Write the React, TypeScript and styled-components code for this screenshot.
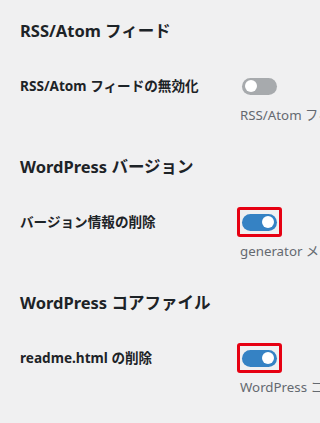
import styled, { createGlobalStyle } from "styled-components";

const GlobalStyle = createGlobalStyle`
  html, body {
    margin: 0;
    padding: 0;
    background: #f0f0f1;
    overflow: hidden;
  }
  body {
    font-family: "Noto Sans", "Noto Sans CJK JP", sans-serif;
    color: #1d2327;
  }
`;

const Page = styled.div`
  width: 320px;
  height: 423px;
  overflow: hidden;
  padding: 19px 0 0 20px;
  box-sizing: border-box;
`;

const Section = styled.section`
  margin-bottom: 30px;
`;

const Heading = styled.h2`
  margin: 0;
  font-size: 16.5px;
  line-height: 24px;
  font-weight: 700;
  white-space: nowrap;
`;

const Row = styled.div`
  display: grid;
  grid-template-columns: 220px 400px;
  margin-top: 28px;
`;

const Label = styled.div`
  font-size: 13.6px;
  font-weight: 700;
  line-height: 30px;
  white-space: nowrap;
`;

const Field = styled.div`
  display: flex;
  flex-direction: column;
  align-items: flex-start;
`;

const SwitchBox = styled.span<{ $marked: boolean }>`
  display: inline-flex;
  align-items: center;
  justify-content: center;
  width: 45px;
  height: 30px;
  box-sizing: border-box;
  margin-left: -3px;
  border: 3px solid ${(p) => (p.$marked ? "#e60012" : "transparent")};
  border-radius: 3px;
`;

const Track = styled.span<{ $on: boolean }>`
  display: flex;
  align-items: center;
  justify-content: ${(p) => (p.$on ? "flex-end" : "flex-start")};
  width: 35px;
  height: 17px;
  padding: 0 3px;
  box-sizing: border-box;
  border-radius: 9px;
  background: ${(p) => (p.$on ? "#3582c4" : "#a7aaad")};
`;

const Knob = styled.span`
  width: 12px;
  height: 12px;
  border-radius: 50%;
  background: #fff;
`;

const Description = styled.p`
  margin: 4px 0 0;
  font-size: 13.3px;
  line-height: 20px;
  color: #646970;
  white-space: nowrap;
`;

interface Setting {
  heading: string;
  label: string;
  on: boolean;
  marked: boolean;
  description: string;
}

const settings: Setting[] = [
  {
    heading: "RSS/Atom フィード",
    label: "RSS/Atom フィードの無効化",
    on: false,
    marked: false,
    description: "RSS/Atom フィードを出力しないようにします。",
  },
  {
    heading: "WordPress バージョン",
    label: "バージョン情報の削除",
    on: true,
    marked: true,
    description: "generator メタタグからバージョン情報を削除します。",
  },
  {
    heading: "WordPress コアファイル",
    label: "readme.html の削除",
    on: true,
    marked: true,
    description: "WordPress コアファイルの readme.html を削除します。",
  },
];

const App = () => {
  return (
    <>
      <GlobalStyle />
      <Page>
        {settings.map((item) => (
          <Section key={item.heading}>
            <Heading>{item.heading}</Heading>
            <Row>
              <Label>{item.label}</Label>
              <Field>
                <SwitchBox $marked={item.marked}>
                  <Track $on={item.on}>
                    <Knob />
                  </Track>
                </SwitchBox>
                <Description>{item.description}</Description>
              </Field>
            </Row>
          </Section>
        ))}
      </Page>
    </>
  );
};

export default App;
